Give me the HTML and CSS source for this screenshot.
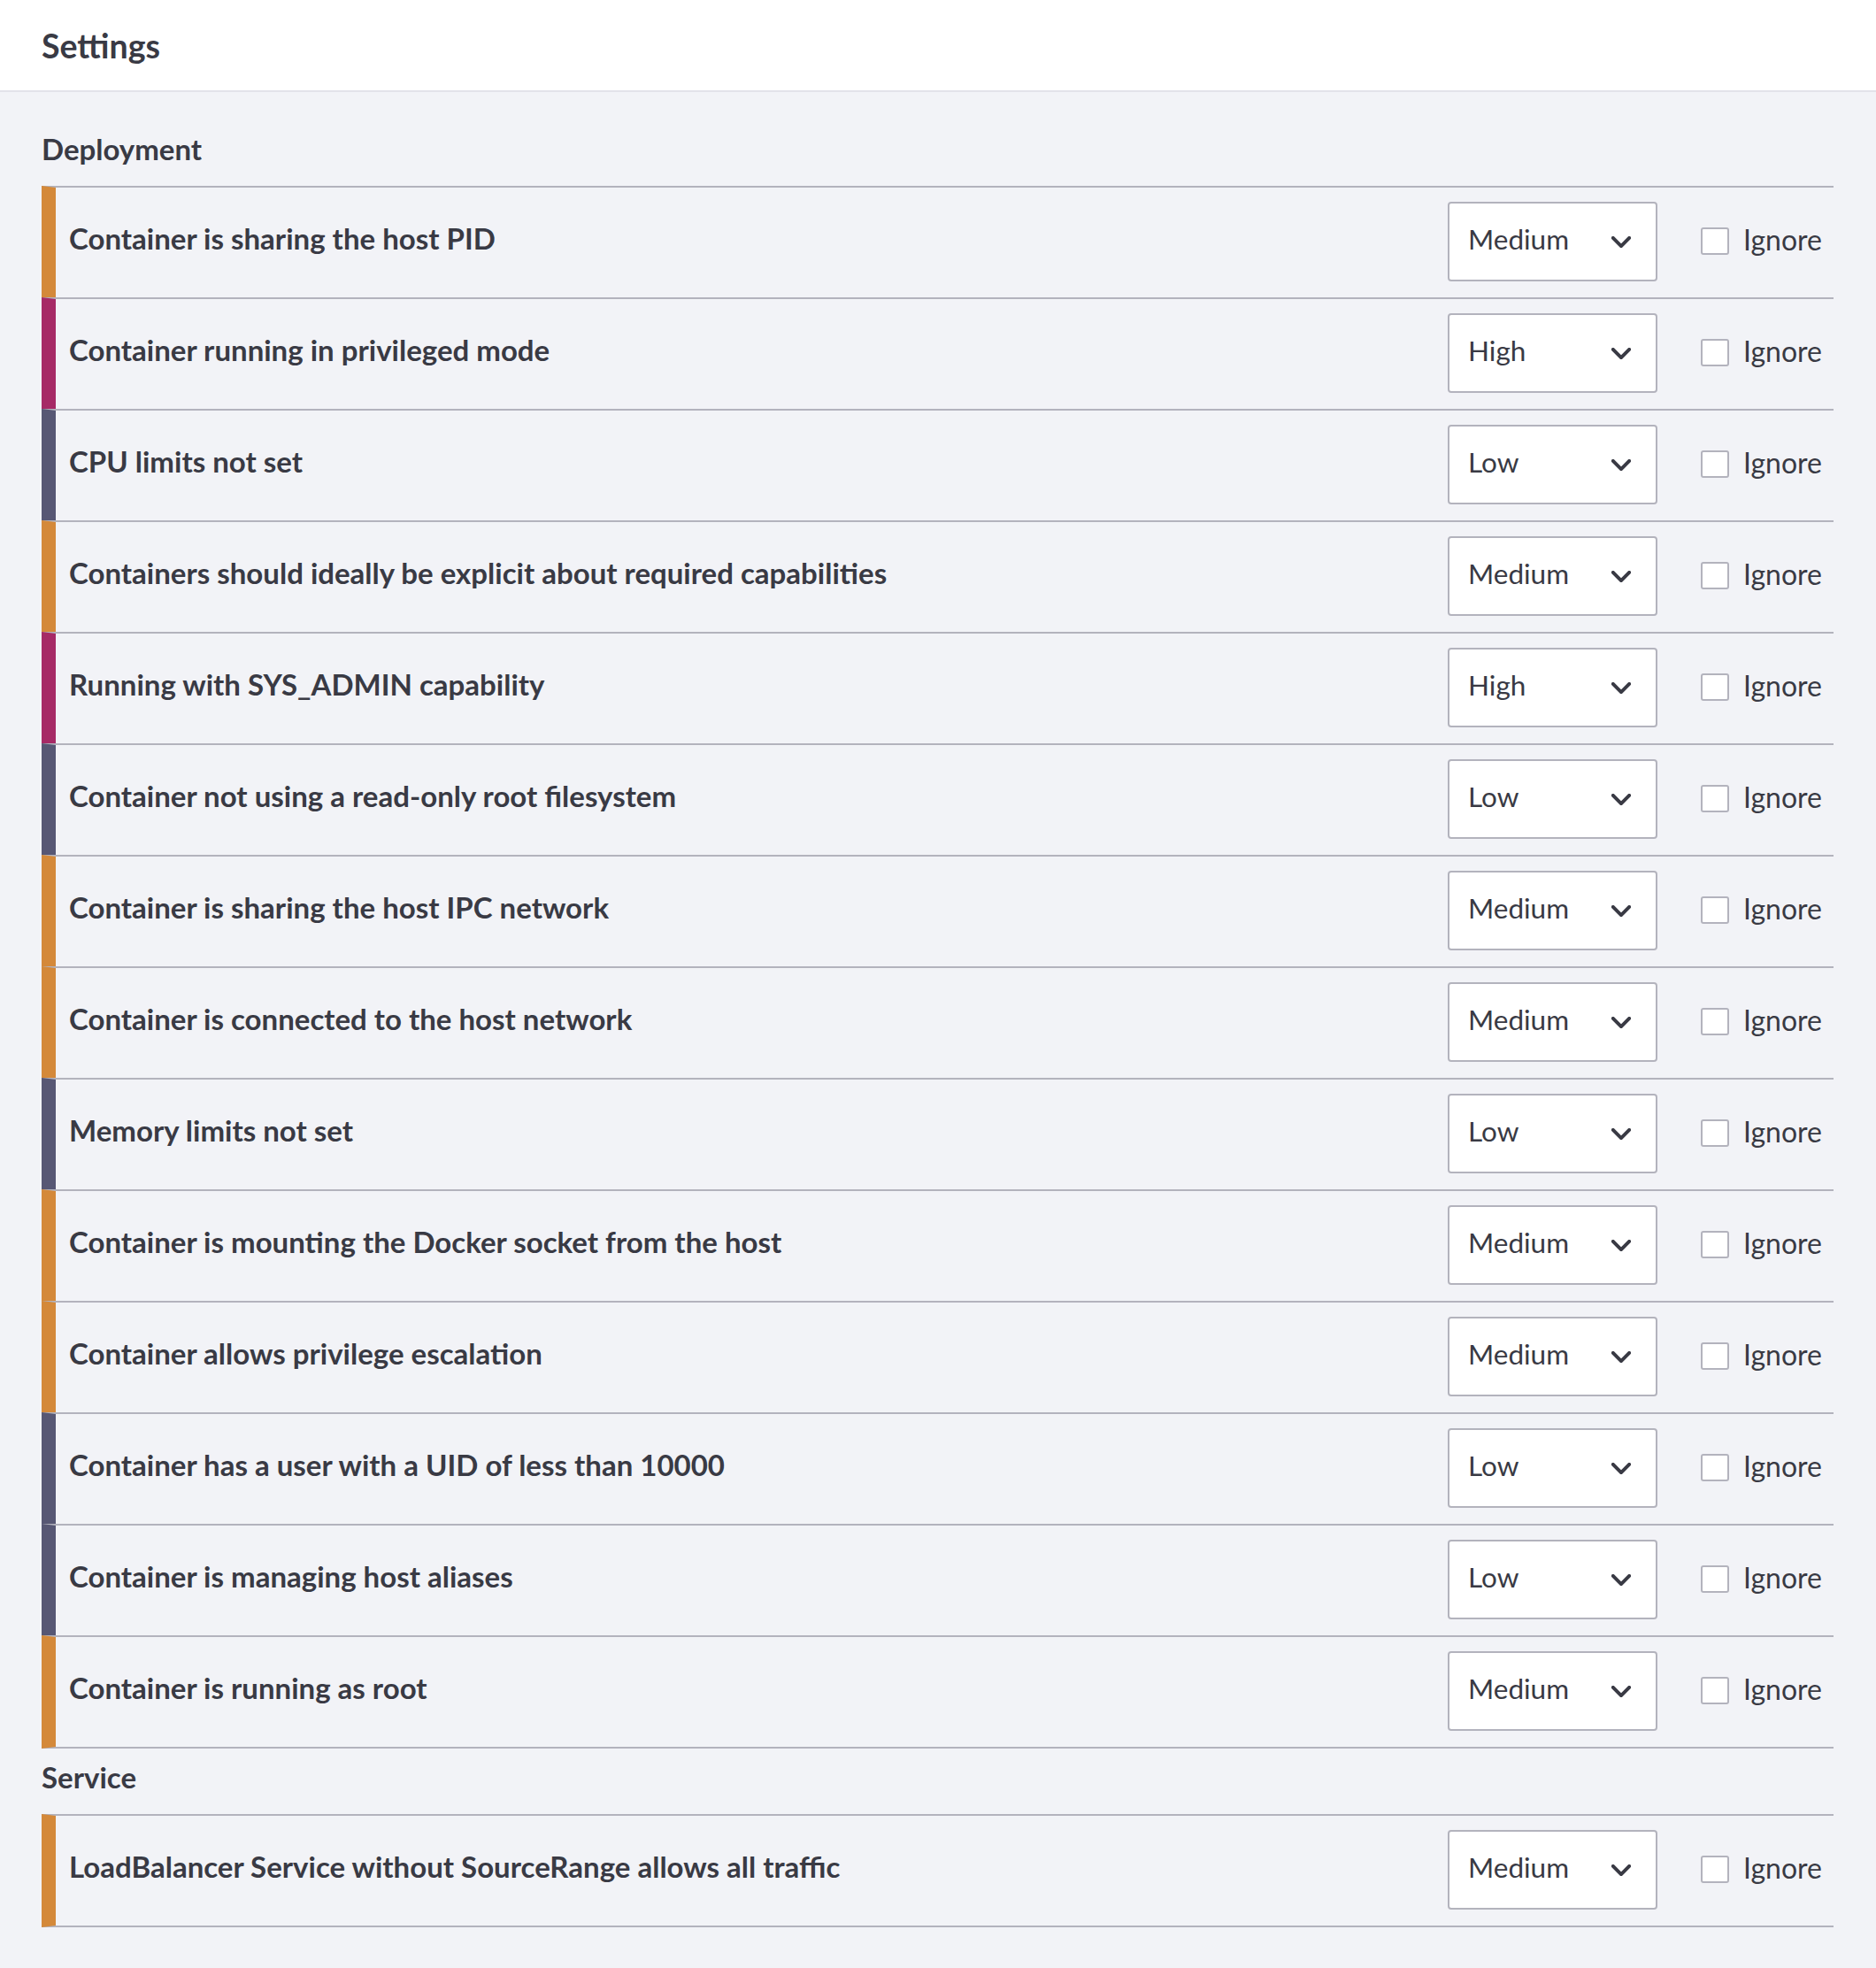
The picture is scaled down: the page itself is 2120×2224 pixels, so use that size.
FILE: index.html
```html
<!DOCTYPE html>
<html lang="en">
<head>
<meta charset="utf-8">
<title>Settings</title>
<link rel="stylesheet" href="styles.css">
</head>
<body>
<header class="page-header"><h1 class="page-title">Settings</h1></header>
<main class="content">
  <section class="group group-first">
    <h2 class="group-title">Deployment</h2>
    <ul class="rules">
      <li class="rule sev-medium"><span class="rule-name">Container is sharing the host PID</span><div class="controls"><div class="select"><span>Medium</span><svg class="chev" viewBox="0 0 24 14"><path d="M2 2l10 10L22 2"/></svg></div><label class="ignore"><span class="box"></span><span class="ignore-text">Ignore</span></label></div></li>
      <li class="rule sev-high"><span class="rule-name">Container running in privileged mode</span><div class="controls"><div class="select"><span>High</span><svg class="chev" viewBox="0 0 24 14"><path d="M2 2l10 10L22 2"/></svg></div><label class="ignore"><span class="box"></span><span class="ignore-text">Ignore</span></label></div></li>
      <li class="rule sev-low"><span class="rule-name">CPU limits not set</span><div class="controls"><div class="select"><span>Low</span><svg class="chev" viewBox="0 0 24 14"><path d="M2 2l10 10L22 2"/></svg></div><label class="ignore"><span class="box"></span><span class="ignore-text">Ignore</span></label></div></li>
      <li class="rule sev-medium"><span class="rule-name">Containers should ideally be explicit about required capabilities</span><div class="controls"><div class="select"><span>Medium</span><svg class="chev" viewBox="0 0 24 14"><path d="M2 2l10 10L22 2"/></svg></div><label class="ignore"><span class="box"></span><span class="ignore-text">Ignore</span></label></div></li>
      <li class="rule sev-high"><span class="rule-name">Running with SYS_ADMIN capability</span><div class="controls"><div class="select"><span>High</span><svg class="chev" viewBox="0 0 24 14"><path d="M2 2l10 10L22 2"/></svg></div><label class="ignore"><span class="box"></span><span class="ignore-text">Ignore</span></label></div></li>
      <li class="rule sev-low"><span class="rule-name">Container not using a read-only root filesystem</span><div class="controls"><div class="select"><span>Low</span><svg class="chev" viewBox="0 0 24 14"><path d="M2 2l10 10L22 2"/></svg></div><label class="ignore"><span class="box"></span><span class="ignore-text">Ignore</span></label></div></li>
      <li class="rule sev-medium"><span class="rule-name">Container is sharing the host IPC network</span><div class="controls"><div class="select"><span>Medium</span><svg class="chev" viewBox="0 0 24 14"><path d="M2 2l10 10L22 2"/></svg></div><label class="ignore"><span class="box"></span><span class="ignore-text">Ignore</span></label></div></li>
      <li class="rule sev-medium"><span class="rule-name">Container is connected to the host network</span><div class="controls"><div class="select"><span>Medium</span><svg class="chev" viewBox="0 0 24 14"><path d="M2 2l10 10L22 2"/></svg></div><label class="ignore"><span class="box"></span><span class="ignore-text">Ignore</span></label></div></li>
      <li class="rule sev-low"><span class="rule-name">Memory limits not set</span><div class="controls"><div class="select"><span>Low</span><svg class="chev" viewBox="0 0 24 14"><path d="M2 2l10 10L22 2"/></svg></div><label class="ignore"><span class="box"></span><span class="ignore-text">Ignore</span></label></div></li>
      <li class="rule sev-medium"><span class="rule-name">Container is mounting the Docker socket from the host</span><div class="controls"><div class="select"><span>Medium</span><svg class="chev" viewBox="0 0 24 14"><path d="M2 2l10 10L22 2"/></svg></div><label class="ignore"><span class="box"></span><span class="ignore-text">Ignore</span></label></div></li>
      <li class="rule sev-medium"><span class="rule-name">Container allows privilege escalation</span><div class="controls"><div class="select"><span>Medium</span><svg class="chev" viewBox="0 0 24 14"><path d="M2 2l10 10L22 2"/></svg></div><label class="ignore"><span class="box"></span><span class="ignore-text">Ignore</span></label></div></li>
      <li class="rule sev-low"><span class="rule-name">Container has a user with a UID of less than 10000</span><div class="controls"><div class="select"><span>Low</span><svg class="chev" viewBox="0 0 24 14"><path d="M2 2l10 10L22 2"/></svg></div><label class="ignore"><span class="box"></span><span class="ignore-text">Ignore</span></label></div></li>
      <li class="rule sev-low"><span class="rule-name">Container is managing host aliases</span><div class="controls"><div class="select"><span>Low</span><svg class="chev" viewBox="0 0 24 14"><path d="M2 2l10 10L22 2"/></svg></div><label class="ignore"><span class="box"></span><span class="ignore-text">Ignore</span></label></div></li>
      <li class="rule sev-medium"><span class="rule-name">Container is running as root</span><div class="controls"><div class="select"><span>Medium</span><svg class="chev" viewBox="0 0 24 14"><path d="M2 2l10 10L22 2"/></svg></div><label class="ignore"><span class="box"></span><span class="ignore-text">Ignore</span></label></div></li>
    </ul>
  </section>
  <section class="group">
    <h2 class="group-title">Service</h2>
    <ul class="rules">
      <li class="rule sev-medium"><span class="rule-name">LoadBalancer Service without SourceRange allows all traffic</span><div class="controls"><div class="select"><span>Medium</span><svg class="chev" viewBox="0 0 24 14"><path d="M2 2l10 10L22 2"/></svg></div><label class="ignore"><span class="box"></span><span class="ignore-text">Ignore</span></label></div></li>
    </ul>
  </section>
</main>
</body>
</html>
```

FILE: styles.css
```css
* { box-sizing: border-box; }
html, body { margin: 0; padding: 0; }
body {
  background: #f2f3f7;
  color: #393a44;
  font-family: Lato, "Noto Sans", sans-serif;
  min-height: 2224px;
}
.page-header {
  height: 104px;
  background: #ffffff;
  border-bottom: 2px solid #e3e3ea;
  display: flex;
  align-items: center;
  padding: 0 47px;
}
.page-title {
  margin: 0;
  font-size: 37.5px;
  font-weight: 700;
  line-height: 40px;
  position: relative;
  top: 1px;
}
.content {
  padding: 32px 48px 46px 47px;
}
.group { padding-top: 12px; }
.group-title {
  margin: 0 0 22px 0;
  height: 40px;
  display: flex;
  align-items: center;
  font-size: 33px;
  font-weight: 700;
}
.rules { list-style: none; margin: 0; padding: 0; }
.rule {
  height: 126px;
  display: flex;
  align-items: center;
  border-top: 2px solid #b3b3bd;
  border-left: 16px solid #d4893a;
  padding-left: 15px;
}
.rule:last-child { border-bottom: 2px solid #b3b3bd; height: 128px; }
.sev-medium { border-left-color: #d4893a; }
.sev-high { border-left-color: #a62a66; }
.sev-low { border-left-color: #575774; }
.rule-name {
  flex: 1;
  font-size: 33px;
  font-weight: 700;
  position: relative;
  top: -5px;
}
.controls { display: flex; align-items: center; }
.select {
  width: 237px;
  height: 90px;
  background: #ffffff;
  border: 2px solid #b3b3bd;
  border-radius: 4px;
  display: flex;
  align-items: center;
  justify-content: space-between;
  padding: 0 28px 0 21px;
  font-size: 31.5px;
  position: relative;
  top: -1px;
}
.select span { position: relative; top: -3px; }
.chev {
  width: 22px;
  height: 13px;
  fill: none;
  stroke: #393a44;
  stroke-width: 4.4;
  stroke-linecap: round;
  stroke-linejoin: round;
}
.ignore {
  display: flex;
  align-items: center;
  margin-left: 49px;
  margin-right: 13px;
  font-size: 32px;
}
.ignore-text { position: relative; top: -4px; }
.box {
  width: 32px;
  height: 31px;
  background: #ffffff;
  border: 2px solid #b3b3bd;
  border-radius: 3px;
  margin-right: 16px;
  position: relative;
  top: -2px;
}
```
